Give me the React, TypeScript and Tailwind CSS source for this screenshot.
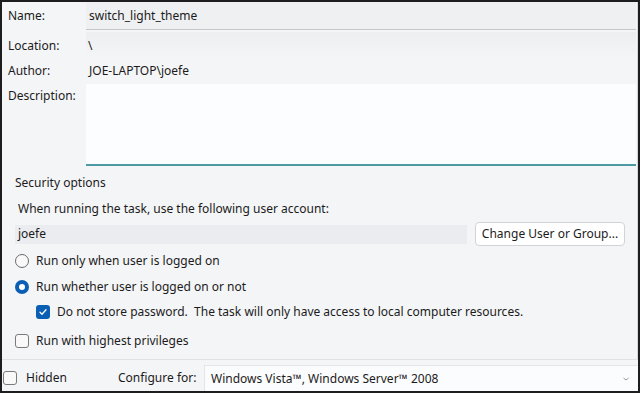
import React from 'react';

const font = { fontFamily: '"Noto Sans", "Open Sans", sans-serif' };

function Radio({ checked }: { checked?: boolean }) {
  if (checked) {
    return (
      <span className="flex h-[14px] w-[14px] items-center justify-center rounded-full bg-[#0a5fb4]">
        <span className="h-[6px] w-[6px] rounded-full bg-white" />
      </span>
    );
  }
  return <span className="h-[14px] w-[14px] rounded-full border border-[#6b6b6b] bg-[#f9f9f9]" />;
}

function Check({ checked }: { checked?: boolean }) {
  if (checked) {
    return (
      <span className="flex h-[14px] w-[14px] items-center justify-center rounded-[3px] bg-[#0a5fb4]">
        <svg width="10" height="10" viewBox="0 0 10 10" fill="none">
          <path d="M2 5.2l2 2 4-4.4" stroke="white" strokeWidth="1.3" strokeLinecap="round" strokeLinejoin="round" />
        </svg>
      </span>
    );
  }
  return <span className="h-[14px] w-[14px] rounded-[3px] border border-[#7a7a7a] bg-[#f9f9f9]" />;
}

export default function App() {
  return (
    <div
      className="flex h-[393px] w-[640px] flex-col overflow-hidden border-t-2 border-l-2 border-r-2 border-b-2 border-[#1d1d1f] bg-[#f4f5f7] text-[12px] text-[#1b1b1b]"
      style={font}
    >
      <div className="flex flex-col border-r border-[#d6d7da] pr-[1px]">
        <div className="flex h-[28px] items-center">
          <span className="w-[84px] pl-[6px]">Name:</span>
          <div className="flex h-full flex-1 items-center border-b border-[#c5c6c9] bg-[#eef0f2] pl-[3px] pt-[1px]">switch_light_theme</div>
        </div>
        <div className="mt-[2px] flex h-[26px] items-center">
          <span className="w-[84px] pl-[6px] pt-[2px]">Location:</span>
          <div className="flex h-full flex-1 items-center bg-gradient-to-b from-[#eceef0] to-[#f4f5f7] pl-[2px] pt-[2px]">\</div>
        </div>
        <div className="flex h-[26px] items-center">
          <span className="w-[84px] pl-[6px]">Author:</span>
          <div className="flex h-full flex-1 items-center pl-[3px]">JOE-LAPTOP\joefe</div>
        </div>
        <div className="flex h-[82px]">
          <span className="w-[84px] pl-[6px] pt-[3px]">Description:</span>
          <div className="flex-1 border-b-2 border-[#4d9aa3] bg-[#fbfdfe]" />
        </div>
      </div>

      <div className="flex flex-1 flex-col border-r border-[#d6d7da] pl-[13px] pr-[10px]">
        <div className="mt-[8px] h-[18px] leading-[18px]">Security options</div>
        <div className="mt-[8px] h-[18px] pl-[3px] leading-[18px]">When running the task, use the following user account:</div>
        <div className="mt-[4px] flex items-center">
          <div className="flex h-[19px] w-[452px] items-center bg-[#ebecef] pl-[3px]">joefe</div>
          <button className="ml-[8px] h-[24px] w-[150px] rounded-[4px] border border-[#d2d3d6] bg-white text-[12px] text-[#1b1b1b]">
            Change User or Group...
          </button>
        </div>
        <div className="mt-[5px] flex h-[20px] items-center gap-[7px]">
          <Radio />
          <span>Run only when user is logged on</span>
        </div>
        <div className="mt-[6px] flex h-[20px] items-center gap-[7px]">
          <Radio checked />
          <span>Run whether user is logged on or not</span>
        </div>
        <div className="mt-[5px] flex h-[20px] items-center gap-[7px] pl-[21px]">
          <Check checked />
          <span className="whitespace-pre">Do not store password.  The task will only have access to local computer resources.</span>
        </div>
        <div className="mt-[9px] flex h-[20px] items-center gap-[7px]">
          <Check />
          <span>Run with highest privileges</span>
        </div>
      </div>

      <div className="flex h-[32px] items-end border-t border-[#e1e2e5] pl-[1px]">
        <div className="flex h-[26px] w-full items-center">
          <Check />
          <span className="ml-[9px] w-[92px]">Hidden</span>
          <span className="w-[86px]">Configure for:</span>
          <div className="flex h-full flex-1 items-center justify-between border-l border-t border-[#e4e5e8] bg-[#fbfcfd] pl-[6px] pr-[8px]">
            <span>Windows Vista™, Windows Server™ 2008</span>
            <svg width="8" height="6" viewBox="0 0 8 6" fill="none">
              <path d="M1.5 2l2.5 2 2.5-2" stroke="#9a9a9a" strokeWidth="1" />
            </svg>
          </div>
        </div>
      </div>
    </div>
  );
}
